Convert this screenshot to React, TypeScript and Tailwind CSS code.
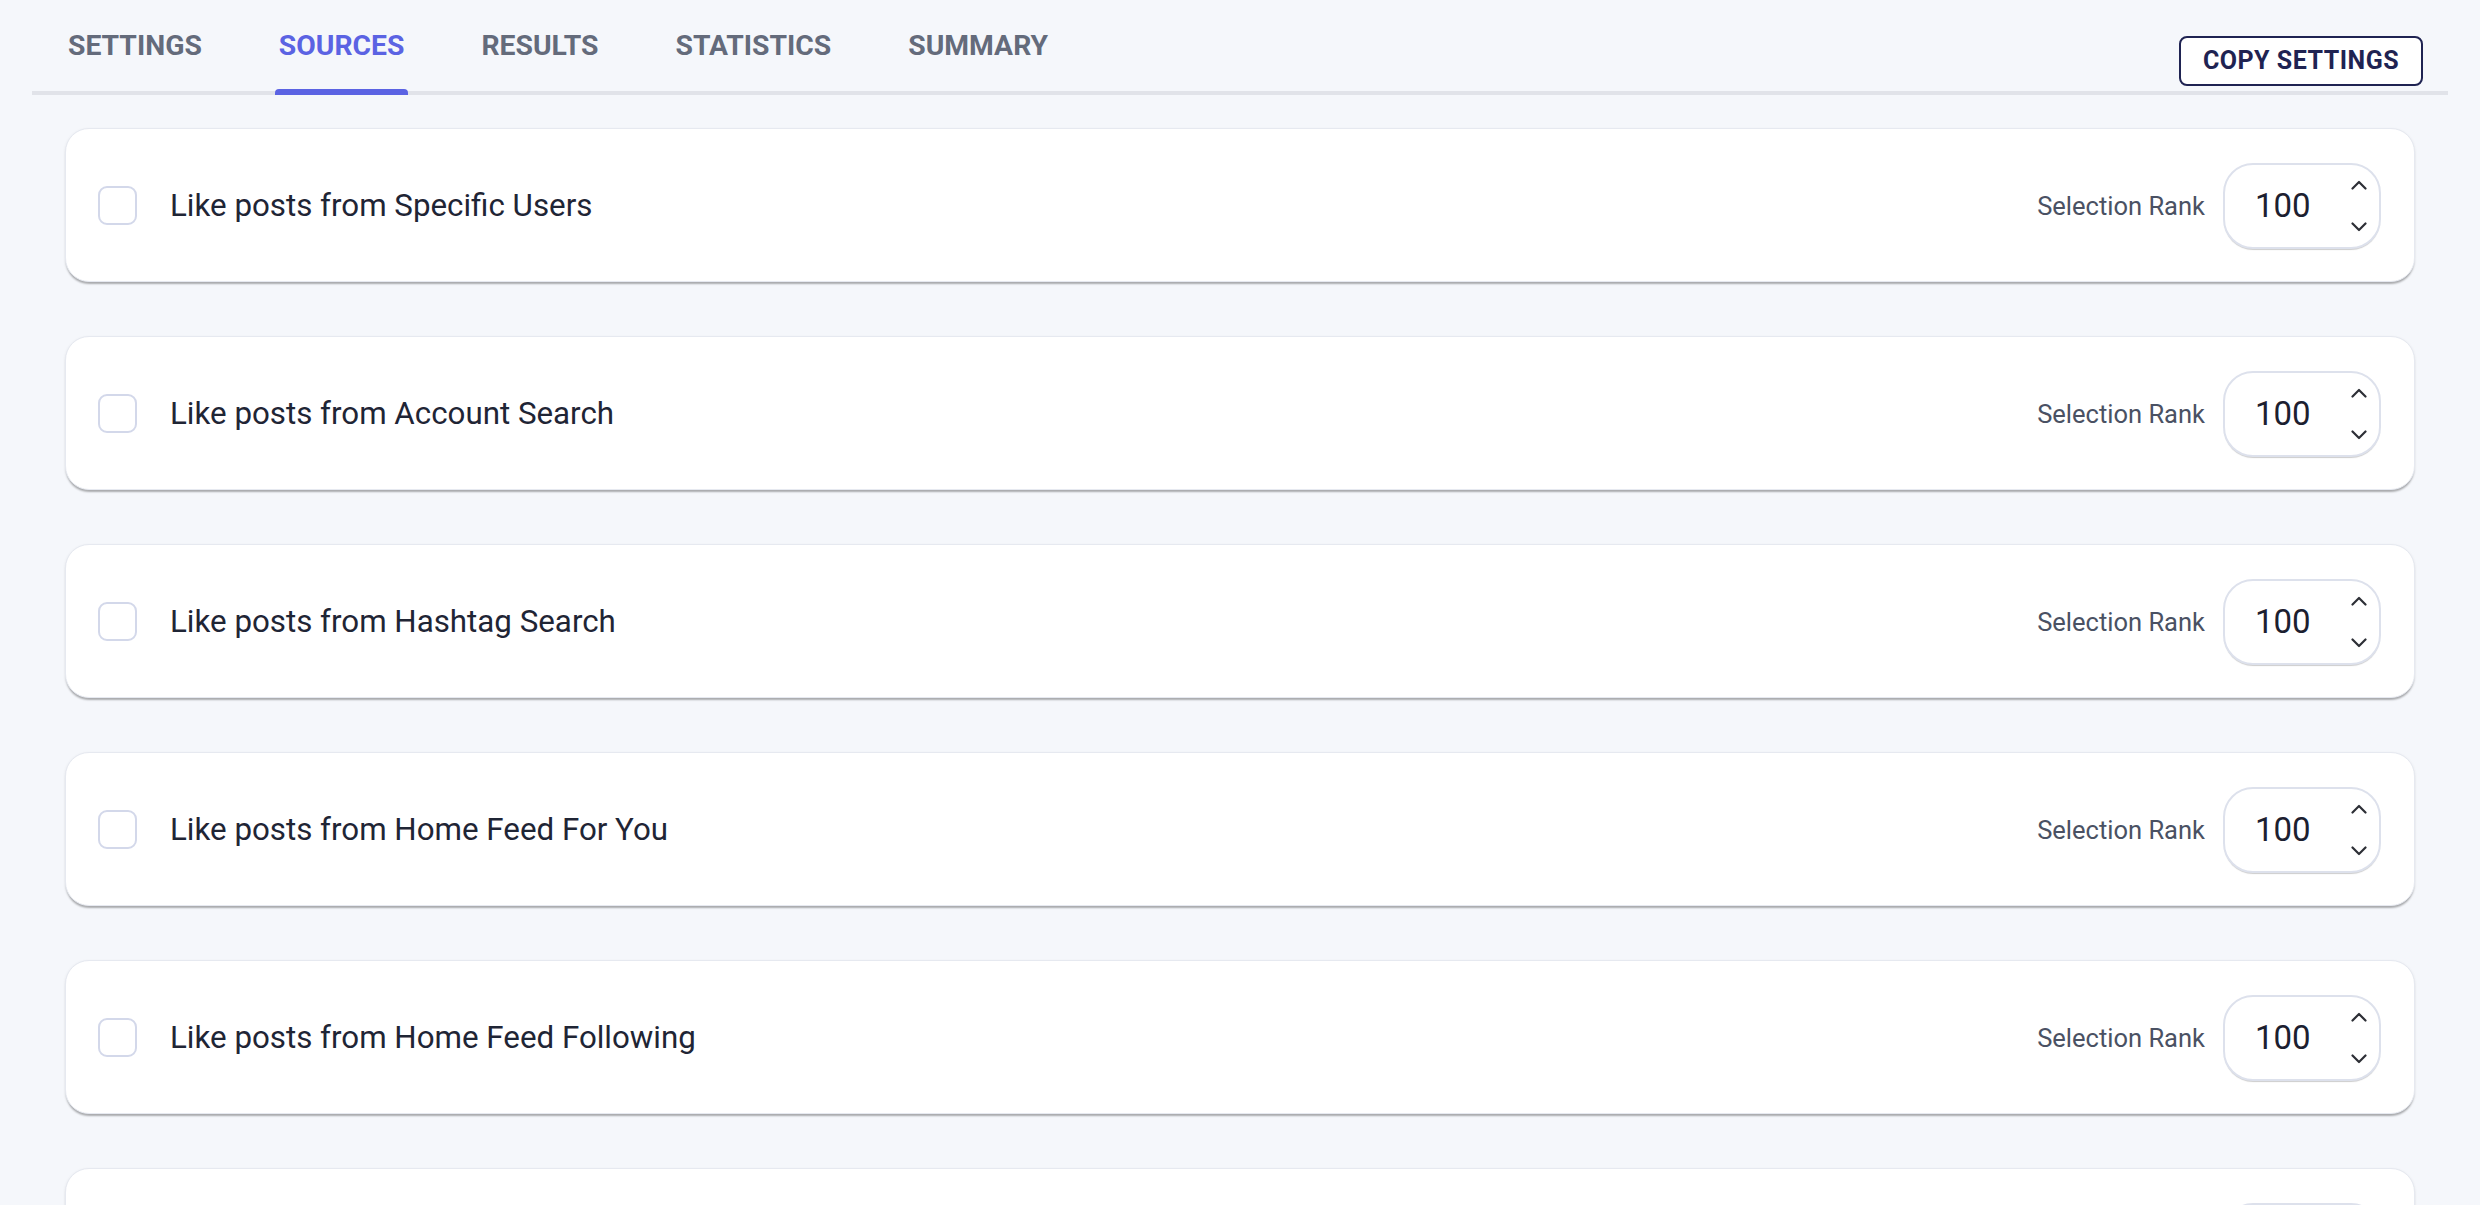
import React from 'react';

const TABS = ['SETTINGS', 'SOURCES', 'RESULTS', 'STATISTICS', 'SUMMARY'];

const SOURCES = [
  'Like posts from Specific Users',
  'Like posts from Account Search',
  'Like posts from Hashtag Search',
  'Like posts from Home Feed For You',
  'Like posts from Home Feed Following',
  'Like posts from Explore Page',
];

const Chevron: React.FC<{ up?: boolean }> = ({ up }) => (
  <svg width="16" height="10" viewBox="0 0 16 10" fill="none">
    <path
      d={up ? 'M1.5 8.5 L8 2 L14.5 8.5' : 'M1.5 1.5 L8 8 L14.5 1.5'}
      stroke="#2d2f36"
      strokeWidth="2.2"
      strokeLinecap="round"
      strokeLinejoin="round"
    />
  </svg>
);

const SourceCard: React.FC<{ label: string }> = ({ label }) => (
  <div className="flex h-[154px] shrink-0 items-center rounded-[24px] border border-[#e6e9f0] bg-white pl-[32px] pr-[33px] shadow-[0_3px_2px_-1px_rgba(0,0,0,0.28),0_1px_3px_0_rgba(0,0,0,0.08)]">
    <div className="h-[39px] w-[39px] shrink-0 rounded-[9px] border-2 border-[#d3d8ea] bg-white" />
    <span className="ml-[33px] pt-[2px] text-[31.3px] text-[#1f2535]">{label}</span>
    <div className="ml-auto flex items-center pt-[2px]">
      <span className="text-[25.5px] text-[#4a5163]">Selection Rank</span>
      <div className="ml-[18px] flex h-[86px] w-[158px] items-center rounded-[30px] border-2 border-[#dde1ec] bg-white pl-[30px] pr-[12px] shadow-[0_2px_1px_-1px_rgba(0,0,0,0.2)]">
        <span className="text-[33px] text-[#1c2030]">100</span>
        <div className="ml-auto flex h-full flex-col items-center justify-between py-[15px]">
          <Chevron up />
          <Chevron />
        </div>
      </div>
    </div>
  </div>
);

const App: React.FC = () => {
  return (
    <div className="min-h-screen w-full bg-[#f5f7fb] font-['Roboto',sans-serif]">
      {/* Tab header */}
      <div className="px-[32px]">
        <div className="flex h-[95px] items-stretch border-b-[4px] border-[#e1e3e9]">
          <div className="flex gap-[69px] pl-[32px]">
            {TABS.map((tab) => {
              const active = tab === 'SOURCES';
              return (
                <div key={tab} className="relative flex flex-col px-[4px]">
                  <span
                    className={
                      'mt-[31px] text-[28.3px] font-bold leading-[30px] ' +
                      (active ? 'text-[#5b63e3]' : 'text-[#646b7b]')
                    }
                  >
                    {tab}
                  </span>
                  {active && (
                    <div className="absolute bottom-[-4px] left-0 right-0 h-[6px] rounded-t-[4px] bg-[#5b63e3]" />
                  )}
                </div>
              );
            })}
          </div>
          <div className="ml-auto flex items-start pr-[25px] pt-[36px]">
            <button className="flex h-[50px] w-[244px] items-center justify-center rounded-[8px] border-2 border-[#1f2352] bg-white text-[25px] font-bold tracking-[0.5px] text-[#1f2352]">
              COPY SETTINGS
            </button>
          </div>
        </div>
      </div>

      {/* Source cards */}
      <div className="flex flex-col gap-[54px] px-[65px] pb-[40px] pt-[33px]">
        {SOURCES.map((s) => (
          <SourceCard key={s} label={s} />
        ))}
      </div>
    </div>
  );
};

export default App;
